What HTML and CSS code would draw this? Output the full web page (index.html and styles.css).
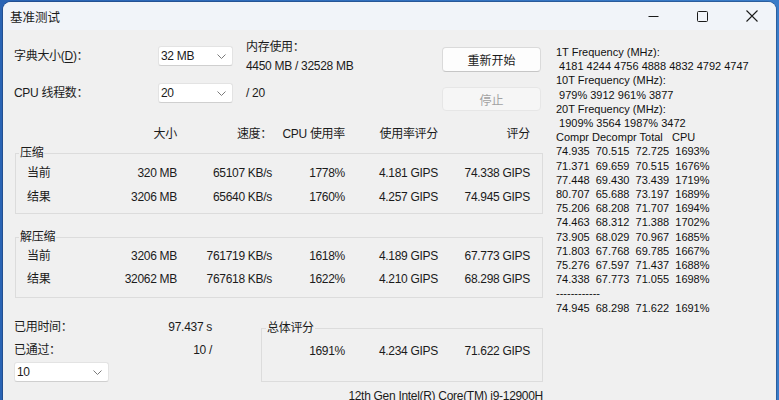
FILE: index.html
```html
<!DOCTYPE html>
<html lang="zh-CN">
<head>
  <meta charset="UTF-8">
  <meta name="viewport" content="width=device-width, initial-scale=1.0">
  <title>基准测试</title>
  <link rel="stylesheet" href="styles.css">
</head>
<body>
  <div class="window">
    <div class="titlebar">
      <span class="title">基准测试</span>
      <div class="controls">
        <span class="ctl"><svg width="11" height="11" viewBox="0 0 11 11"><path d="M0.5 5.5h10" stroke="#1b1b1b" stroke-width="1"/></svg></span>
        <span class="ctl"><svg width="11" height="11" viewBox="0 0 11 11"><rect x="0.5" y="0.5" width="10" height="10" rx="1" fill="none" stroke="#1b1b1b" stroke-width="1"/></svg></span>
        <span class="ctl"><svg width="12" height="12" viewBox="0 0 12 12"><path d="M0.5 0.5L11.5 11.5M11.5 0.5L0.5 11.5" stroke="#1b1b1b" stroke-width="1.1"/></svg></span>
      </div>
    </div>
    <div class="content">
      <div class="left">
        <div class="setup">
          <span class="lbl">字典大小(<u>D</u>)：</span>
          <div class="combo">32 MB<svg class="chev" width="9" height="5" viewBox="0 0 9 5"><path d="M0.5 0.5L4.5 4.5L8.5 0.5" fill="none" stroke="#7a7a7a"/></svg></div>
          <div class="mem">内存使用：<br>4450 MB / 32528 MB</div>
          <button class="btn">重新开始</button>
          <span class="lbl">CPU 线程数：</span>
          <div class="combo">20<svg class="chev" width="9" height="5" viewBox="0 0 9 5"><path d="M0.5 0.5L4.5 4.5L8.5 0.5" fill="none" stroke="#7a7a7a"/></svg></div>
          <span class="lbl">/ 20</span>
          <button class="btn btn-off" disabled>停止</button>
        </div>

        <div class="cols head">
          <span></span><span>大小</span><span>速度：</span><span>CPU 使用率</span><span>使用率评分</span><span>评分</span>
        </div>

        <fieldset class="group">
          <legend>压缩</legend>
          <div class="cols"><span>当前</span><span>320 MB</span><span>65107 KB/s</span><span>1778%</span><span>4.181 GIPS</span><span>74.338 GIPS</span></div>
          <div class="cols"><span>结果</span><span>3206 MB</span><span>65640 KB/s</span><span>1760%</span><span>4.257 GIPS</span><span>74.945 GIPS</span></div>
        </fieldset>

        <fieldset class="group group-de">
          <legend>解压缩</legend>
          <div class="cols"><span>当前</span><span>3206 MB</span><span>761719 KB/s</span><span>1618%</span><span>4.189 GIPS</span><span>67.773 GIPS</span></div>
          <div class="cols"><span>结果</span><span>32062 MB</span><span>767618 KB/s</span><span>1622%</span><span>4.210 GIPS</span><span>68.298 GIPS</span></div>
        </fieldset>

        <div class="summary">
          <div class="elapsed">
            <div class="pair"><span>已用时间：</span><span>97.437 s</span></div>
            <div class="pair"><span>已通过：</span><span>10 /</span></div>
            <div class="combo combo-small">10<svg class="chev" width="9" height="5" viewBox="0 0 9 5"><path d="M0.5 0.5L4.5 4.5L8.5 0.5" fill="none" stroke="#7a7a7a"/></svg></div>
          </div>
          <fieldset class="group total">
            <legend>总体评分</legend>
            <div class="cols cols-total"><span>1691%</span><span>4.234 GIPS</span><span>71.622 GIPS</span></div>
          </fieldset>
        </div>

        <div class="cpu">12th Gen Intel(R) Core(TM) i9-12900H</div>
      </div>

<pre class="freq">1T Frequency (MHz):
 4181 4244 4756 4888 4832 4792 4747
10T Frequency (MHz):
 979% 3912 961% 3877
20T Frequency (MHz):
 1909% 3564 1987% 3472
Compr Decompr Total   CPU
74.935  70.515  72.725  1693%
71.371  69.659  70.515  1676%
77.448  69.430  73.439  1719%
80.707  65.688  73.197  1689%
75.206  68.208  71.707  1694%
74.463  68.312  71.388  1702%
73.905  68.029  70.967  1685%
71.803  67.768  69.785  1667%
75.276  67.597  71.437  1688%
74.338  67.773  71.055  1698%
------------
74.945  68.298  71.622  1691%</pre>
    </div>
  </div>
</body>
</html>
```

FILE: styles.css
```css
* {
  box-sizing: border-box;
}
body {
  margin: 0;
  height: 400px;
  overflow: hidden;
  background: linear-gradient(90deg, #2a64b4, #3a7cc8);
  font-family: "Liberation Sans", "Noto Sans CJK SC", sans-serif;
  font-size: 12px;
  letter-spacing: -0.3px;
  color: #1b1b1b;
}
.window {
  margin: 2px 3px 0;
  height: 398px;
  background: #f0f0f0;
  border-radius: 8px 8px 0 0;
  overflow: hidden;
  box-shadow: 0 0 0 1px rgba(20, 40, 80, .35);
}
.titlebar {
  height: 28px;
  display: flex;
  align-items: center;
  background: #f1f4f9;
  padding-left: 7px;
}
.title {
  font-family: "Noto Sans CJK SC", sans-serif;
  font-size: 12.5px;
  letter-spacing: 0;
  flex: 1;
}
.controls {
  display: flex;
  height: 100%;
}
.ctl {
  width: 49px;
  display: flex;
  align-items: center;
  justify-content: center;
}
.content {
  display: flex;
}
.left {
  flex: 0 0 553px;
  padding-left: 11px;
}

/* top settings */
.setup {
  display: grid;
  grid-template-columns: 144px 88px 196px 99px;
  grid-template-rows: 37px 37px;
  padding-top: 16px;
}
.lbl {
  line-height: 20px;
}
.lbl u {
  text-decoration-thickness: 1px;
  text-underline-offset: 2px;
}
.combo {
  position: relative;
  width: 75px;
  height: 20px;
  line-height: 18px;
  padding-left: 2px;
  background: #fff;
  border: 1px solid #e3e3e3;
  border-bottom-color: #cfcfcf;
  border-radius: 3px;
}
.chev {
  position: absolute;
  right: 6px;
  top: 7px;
}
.mem {
  line-height: 19px;
  margin-top: -8px;
}
.btn {
  height: 25px;
  margin-top: 1px;
  font: inherit;
  letter-spacing: 0;
  color: #1b1b1b;
  background: #fdfdfd;
  border: 1px solid #dadada;
  border-bottom-color: #c6c6c6;
  border-radius: 4px;
  padding: 0;
}
.btn-off {
  height: 24px;
  margin-top: 4px;
  color: #a2a2a2;
  background: #f6f6f6;
  border-color: #e6e6e6;
}

/* result table */
.cols {
  display: grid;
  grid-template-columns: 100px 61px 95px 73px 93px 92px;
  line-height: 24px;
  text-align: right;
  white-space: nowrap;
}
.cols span:first-child {
  text-align: left;
  padding-left: 11px;
}
.head {
  margin: 5px 0 0 2px;
  line-height: 18px;
}
.group {
  width: 528px;
  margin: 2px 0 0 1px;
  padding: 0 0 4px;
  border: 1px solid #dcdcdc;
}
.group legend {
  margin-left: 3px;
  padding: 0 1px;
  line-height: 16px;
}
.group-de {
  margin-top: 15px;
  padding-bottom: 6px;
}
.group-de .cols {
  line-height: 23px;
}

/* summary */
.summary {
  display: flex;
  margin-top: 18px;
}
.elapsed {
  width: 198px;
}
.pair {
  display: flex;
  justify-content: space-between;
  line-height: 23px;
}
.combo-small {
  width: 95px;
}
.total {
  width: 282px;
  margin: 4px 0 0 49px;
  padding-bottom: 14px;
}
.total legend {
  margin-left: 4px;
}
.cols-total {
  grid-template-columns: 83px 93px 92px;
  line-height: 30px;
}
.cols-total span:first-child {
  text-align: right;
  padding-left: 0;
}
.cpu {
  margin-top: 6px;
  padding-right: 13px;
  line-height: 16px;
  text-align: right;
}

/* frequency log */
.freq {
  margin: 0;
  padding-top: 15px;
  font-family: "Liberation Sans", sans-serif;
  font-size: 11px;
  letter-spacing: 0;
  line-height: 14.2px;
  color: #111;
}
```
